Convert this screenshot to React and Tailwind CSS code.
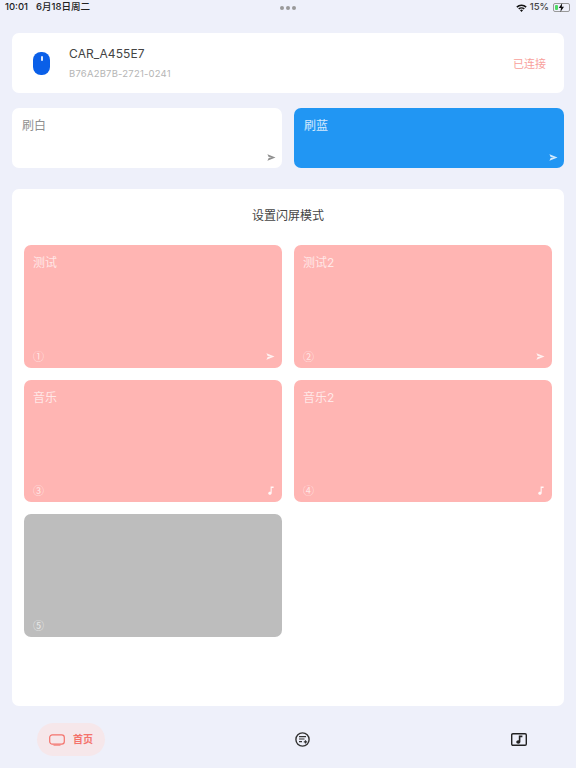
const FONT = "font-['Inter','Noto_Sans_CJK_SC',sans-serif]";

function SendIcon({ className }) {
  return (
    <svg width="9" height="7" viewBox="0 0 10 8" className={className}>
      <path d="M0.3 0.2 L9.6 4 L0.3 7.8 L1.8 4.6 L5.5 4 L1.8 3.4 Z" fill="currentColor" />
    </svg>
  );
}

function NoteIcon({ className }) {
  return (
    <svg width="6" height="9" viewBox="0 0 6 9" className={className}>
      <path d="M2.6 0.4 H5.6 V2 H3.7 V6.9 C3.7 8 2.9 8.7 1.9 8.7 C0.9 8.7 0.2 8.1 0.2 7.2 C0.2 6.3 1 5.7 1.9 5.7 C2.2 5.7 2.4 5.7 2.6 5.8 Z" fill="currentColor" />
    </svg>
  );
}

function ModeCard({ title, num, icon, gray }) {
  return (
    <div className={`h-[122.5px] rounded-[7px] pl-[9px] pr-[10px] pt-[8px] pb-[5px] flex flex-col justify-between text-white/70 ${gray ? "bg-[#bdbdbd]" : "bg-[#ffb5b3]"}`}>
      <div className="text-[12px] leading-[19px]">{title}</div>
      <div className="flex items-center justify-between h-[14px]">
        <span className="text-[11px] leading-[14px] font-['Noto_Sans_CJK_SC',sans-serif]">{num}</span>
        {icon === "send" && <SendIcon className="text-white/80 -mr-[3px] mt-[2px]" />}
        {icon === "note" && <NoteIcon className="text-white/90 -mr-[2px]" />}
      </div>
    </div>
  );
}

const modes = [
  { title: "测试", num: "①", icon: "send" },
  { title: "测试2", num: "②", icon: "send" },
  { title: "音乐", num: "③", icon: "note" },
  { title: "音乐2", num: "④", icon: "note" },
  { title: "", num: "⑤", gray: true },
];

export default function App() {
  return (
    <div className={`w-[576px] h-[768px] overflow-hidden bg-[#eef0fa] flex flex-col ${FONT}`}>
      {/* status bar */}
      <div className="h-[33px] relative shrink-0">
        <div className="flex items-center justify-between h-[15px] pl-[5px] pr-[6px] text-[9.5px] font-medium text-[#222]">
          <div className="flex gap-[8px]">
            <span>10:01</span>
            <span>6月18日周二</span>
          </div>
          <div className="flex items-center gap-[3px]">
            <svg width="11" height="8" viewBox="0 0 11 8">
              <path d="M0.3 2.6 A7.4 7.4 0 0 1 10.7 2.6 L9.6 3.7 A5.8 5.8 0 0 0 1.4 3.7 Z M2.2 4.5 A4.7 4.7 0 0 1 8.8 4.5 L7.7 5.6 A3.2 3.2 0 0 0 3.3 5.6 Z M4 6.3 A2.1 2.1 0 0 1 7 6.3 L5.5 7.9 Z" fill="#111" />
            </svg>
            <span className="text-[#444]">15%</span>
            <div className="relative w-[17px] h-[9px] rounded-[2px] border border-[#999] ml-[1px]">
              <div className="absolute left-[1px] top-[1px] bottom-[1px] w-[3px] bg-[#4cd964] rounded-[1px]" />
              <svg width="7" height="9" viewBox="0 0 7 9" className="absolute left-[4px] -top-[1px]">
                <path d="M4.2 0 L0.8 5 H3 L2.4 9 L6 3.8 H3.8 Z" fill="#111" />
              </svg>
            </div>
          </div>
        </div>
        <div className="absolute left-[280px] top-[6px] flex gap-[2px]">
          <span className="w-[4px] h-[4px] rounded-full bg-[#999]" />
          <span className="w-[4px] h-[4px] rounded-full bg-[#999]" />
          <span className="w-[4px] h-[4px] rounded-full bg-[#999]" />
        </div>
      </div>

      <div className="px-3 flex flex-col flex-1 min-h-0">
        {/* device */}
        <div className="h-[60px] bg-white rounded-[7px] flex items-center pl-[21px] pr-[18px] shrink-0">
          <div className="relative w-[17px] h-[23px] rounded-[8px] bg-[#0a5fe8] mt-[1px]">
            <span className="absolute left-[7.5px] top-[4px] w-[2px] h-[5px] rounded-full bg-[#dfe9fb]" />
          </div>
          <div className="ml-[19px] flex-1 -mt-[1px]">
            <div className="text-[12px] leading-[18px] text-[#444] tracking-[0.1px]">CAR_A455E7</div>
            <div className="text-[9.5px] leading-[14px] mt-[4px] text-[#b5b5b5] tracking-[0.2px]">B76A2B7B-2721-0241</div>
          </div>
          <div className="text-[11px] mt-[2px] text-[#f8a09b]">已连接</div>
        </div>

        {/* quick actions */}
        <div className="grid grid-cols-2 gap-3 mt-[15px] shrink-0">
          <div className="h-[60px] rounded-[7px] bg-white pl-[10px] pr-[6px] pt-[8px] flex flex-col justify-between pb-[7px] text-[#8f8f8f]">
            <div className="text-[12px] leading-[19px]">刷白</div>
            <div className="flex justify-end"><SendIcon /></div>
          </div>
          <div className="h-[60px] rounded-[7px] bg-[#2196f3] pl-[10px] pr-[6px] pt-[8px] flex flex-col justify-between pb-[7px] text-white/80">
            <div className="text-[12px] leading-[19px]">刷蓝</div>
            <div className="flex justify-end"><SendIcon /></div>
          </div>
        </div>

        {/* modes */}
        <div className="mt-[21px] h-[517px] bg-white rounded-[7px] px-3 shrink-0">
          <div className="h-[56px] flex items-center justify-center text-[12px] text-[#444] pb-[2px]">设置闪屏模式</div>
          <div className="grid grid-cols-2 gap-x-3 gap-y-[12px]">
            {modes.map((m) => (
              <ModeCard key={m.num} {...m} />
            ))}
          </div>
        </div>

        {/* tab bar */}
        <div className="flex-1 flex items-center justify-between pl-[25px] pr-[37px] pt-[5px]">
          <div className="h-[33px] w-[68px] rounded-full bg-[#f6e7ea] flex items-center justify-center gap-[8px] text-[#f4736c] text-[10px] font-semibold">
            <svg width="16" height="12" viewBox="0 0 16 12" fill="none">
              <rect x="0.7" y="0.8" width="14.6" height="9.4" rx="2.6" stroke="currentColor" strokeWidth="1.2" />
              <path d="M4.5 11.3 H11.5" stroke="currentColor" strokeWidth="0.8" />
            </svg>
            <span>首页</span>
          </div>
          <svg width="15" height="15" viewBox="0 0 15 15" fill="none" className="mr-[12px]">
            <circle cx="7.5" cy="7.5" r="6.6" stroke="#333" strokeWidth="1.4" />
            <path d="M4 4.6 H11 M4 7 H9.5 M4 9.6 H7" stroke="#333" strokeWidth="1.2" />
            <path d="M8.8 9.8 H12.2 M10.5 8.2 V11.4" stroke="#333" strokeWidth="1.2" />
          </svg>
          <svg width="16" height="13" viewBox="0 0 16 13" fill="none">
            <rect x="0.7" y="0.7" width="14.6" height="11.6" rx="1.2" stroke="#222" strokeWidth="1.4" />
            <path d="M7.8 2.4 H11.4 V4.2 H9.4 V8.8 C9.4 10 8.5 10.8 7.3 10.8 C6.1 10.8 5.3 10.1 5.3 9.1 C5.3 8.1 6.2 7.3 7.3 7.3 C7.5 7.3 7.6 7.3 7.8 7.4 Z" fill="#222" />
          </svg>
        </div>
      </div>
    </div>
  );
}
